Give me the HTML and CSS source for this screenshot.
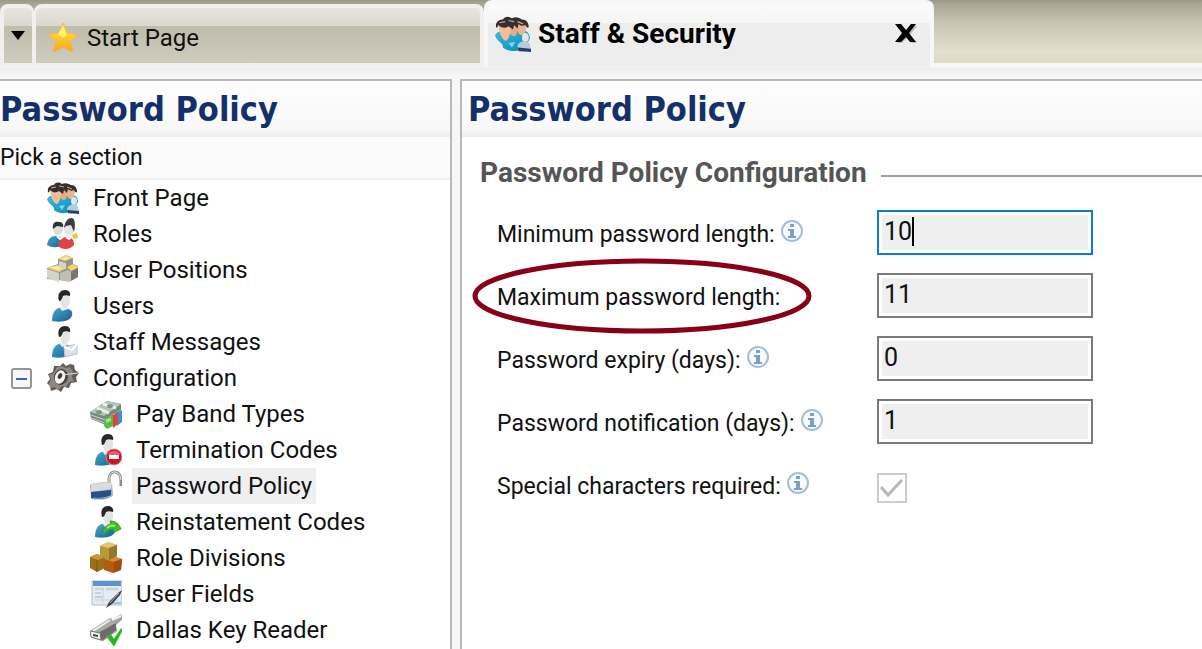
FILE: index.html
```html
<!DOCTYPE html>
<html lang="en">
<head>
    <meta charset="UTF-8">
    <meta name="viewport" content="width=device-width, initial-scale=1.0">
    <title>Staff &amp; Security</title>
    <link rel="stylesheet" href="styles.css">
</head>
<body>
    <!-- shared icon shapes -->
    <svg class="defs" aria-hidden="true">
        <defs>
            <linearGradient id="blue" x1="0" y1="0" x2="1" y2="1">
                <stop offset="0" stop-color="#4aa6d2"/>
                <stop offset="1" stop-color="#14618f"/>
            </linearGradient>
            <linearGradient id="cyan" x1="0" y1="0" x2="1" y2="1">
                <stop offset="0" stop-color="#35bfe2"/>
                <stop offset="1" stop-color="#0a86b8"/>
            </linearGradient>
            <linearGradient id="steel" x1="0" y1="0" x2="1" y2="1">
                <stop offset="0" stop-color="#e4e4e2"/>
                <stop offset="1" stop-color="#6e6e6c"/>
            </linearGradient>
            <linearGradient id="gold" x1="0" y1="0" x2="0" y2="1">
                <stop offset="0" stop-color="#ffef3a"/>
                <stop offset="1" stop-color="#f7a41c"/>
            </linearGradient>
            <symbol id="star" viewBox="0 0 32 32">
                <path d="M16 1l4.6 10 10.4 1.400-7.600 7.400 3 10.400-10-4.800-10 4.800 2.600-10.800L1 12.400l10.600-1.400z" fill="url(#gold)" stroke="#eeb56a" stroke-width="1"/>
                <path d="M16 4l3.600 9-3.600 3-5-4z" fill="#fff36a"/>
            </symbol>
            <symbol id="person" viewBox="0 0 32 32">
                <path d="M5 31c0-8 3-12 7-13 5-1 12 1 13 4 1 4-1 6-4 8-5 2-11 2-16 1z" fill="url(#blue)"/>
                <path d="M12 17l3 4 6-2-3-3z" fill="#dff0f8"/>
                <ellipse cx="18" cy="10" rx="5" ry="8" fill="#e4e4e2"/>
                <path d="M12 11c-2-7 1-11 6-11 4 0 6 3 5 6-3-1-5-1-7 0-1 3-2 5-4 5z" fill="#26282a"/>
            </symbol>
            <symbol id="group" viewBox="0 0 32 32">
                <path d="M0 17c2-4 6-4 9-3l16-1c4 0 6 3 6 7l-5 9c-8 3-14 3-19-1 1-4-6-6-7-11z" fill="url(#cyan)"/>
                <path d="M19 8c1-4 9-3 9 0 0 5-2 9-4 9-3 0-5-4-5-9z" fill="#f0b28c"/>
                <path d="M12 8c1-4 8-3 8 1 0 6-1 9-3 9-3 0-5-4-5-10z" fill="#eca980"/>
                <path d="M3 9c1-3 9-3 11 0 0 4-1 11-4 13-3 0-6-6-7-13z" fill="#f6bd98"/>
                <path d="M1 10c-1-4 2-7 6-7 2-3 5-3 8-1 4-2 7 0 9 1 4 0 6 3 6 7-1 1-2 0-3-2-2 1-4 1-6-1l-1 4-3-3-1 4-4-3c-3 2-6 2-9-1-1 2-1 3-2 2z" fill="#34302d"/>
                <path d="M4 6l5-1M12 4l5 1M20 5l5 2" stroke="#b5afab" stroke-width="1"/>
                <path d="M12 24l3 4 3-5z" fill="#7ed9ee"/>
                <ellipse cx="27" cy="19" rx="3" ry="4" fill="#dfe7ec"/>
                <path d="M20 27c1-5 8-6 11-2l1 6-11 1z" fill="#b9cbd7"/>
                <path d="M20 28l12 1v3l-11-1z" fill="#243f76"/>
            </symbol>
            <symbol id="roles" viewBox="0 0 32 32">
                <path d="M0 27c1-6 4-9 8-9 5-1 8 2 8 9-5 3-11 3-16 0z" fill="url(#blue)"/>
                <path d="M11 28c1-7 5-9 9-9 5 0 7 3 7 8-4 5-12 5-16 1z" fill="#e0424a"/>
                <path d="M24 17l6-2 1 5-4 1z" fill="#f0c83a"/>
                <ellipse cx="11" cy="11" rx="5" ry="6" fill="#ddd"/>
                <path d="M6 11c-1-6 2-8 6-7 3 0 5 2 4 5l-6-1z" fill="#333"/>
                <ellipse cx="22" cy="11" rx="5" ry="7" fill="#e6e5e3"/>
                <path d="M17 10c1-7 4-10 8-10 4 1 3 10 2 14l-3-7-5 1z" fill="#3b3b3b"/>
                <path d="M10 18l3 3 4-3M19 19l3 2 3-3" stroke="#fff" stroke-width="2" fill="none"/>
            </symbol>
            <symbol id="podium" viewBox="0 0 32 32">
                <path d="M0 14l11-4v-5l8-4 7 3v6l5 2v11l-9 4L0 25z" fill="#96948c"/>
                <path d="M0 14l10-3 10 3-8 4zM11 5l8-4 7 3-8 3zM20 13l6-3 6 3-8 4z" fill="#f0d567"/>
                <path d="M3 14l7-2 6 2-4 2zM14 5l5-2 4 1-5 2z" fill="#f5e9b5"/>
                <path d="M0 15l12 4v9L0 24zM12 7l7 2v6l-7-2z" fill="#d5d3cd"/>
                <path d="M13 19l8-3 3 2v9l-2 1-9-2z" fill="#c1beb5"/>
                <path d="M24 18l7-4v9l-7 4z" fill="#77756e"/>
            </symbol>
            <symbol id="message" viewBox="0 0 32 32">
                <use href="#person" width="32" height="32"/>
                <path d="M17 21l13-3v10l-12 3z" fill="#dce1e9" stroke="#bcc5d2"/>
                <path d="M17 21l8 3 5-6" fill="none" stroke="#fff" stroke-width="2"/>
            </symbol>
            <symbol id="gear" viewBox="0 0 32 32">
                <path d="M13 4l3-3 3 3 4-2 4 1 1 5 4 3-3 4 1 5-6 1-2 5-5-1-3 5-4-3-6 2-1-5-3-3 3-4-2-5 5-2 1-6z" fill="#625c58"/>
                <path d="M10 5l5-1 4 2 4-1 3 5-1 5 2 4-5 1-3 5-4-1-4 4-3-3-5 1-1-4 2-5-2-4 5-2z" fill="#8e8883"/>
                <ellipse cx="14" cy="15" rx="7" ry="8" fill="#4a4643" transform="rotate(20 14 15)"/>
                <ellipse cx="13" cy="15" rx="5" ry="7" fill="#f4f4f2" transform="rotate(20 13 15)"/>
                <ellipse cx="13" cy="14" rx="2" ry="3" fill="#3e3a37" transform="rotate(30 13 14)"/>
                <path d="M15 13l16-2" stroke="#e2dfdc" stroke-width="1"/>
            </symbol>
            <symbol id="money" viewBox="0 0 32 32">
                <path d="M0 14L17 3l14 3v12l-15 9L1 21z" fill="#75897a"/>
                <path d="M0 14L17 3l14 3-17 12z" fill="#b5c2b6"/>
                <path d="M7 10l12 5M13 6l13 4" stroke="#e8ede6" stroke-width="3"/>
                <path d="M1 17l14 5 16-10M1 20l14 5" stroke="#cdd6ce" stroke-width="1" fill="none"/>
                <ellipse cx="9" cy="14" rx="3" ry="2" fill="#7e9581"/>
                <ellipse cx="20" cy="8" rx="3" ry="2" fill="#7e9581"/>
                <path d="M25 15l7-3v12l-5 4z" fill="#4b8ccd"/>
                <path d="M21 18l7-3v11l-5 4z" fill="#d8453c"/>
                <path d="M15 20l8-2v10l-6 3-3-3z" fill="#58bd3f"/>
                <path d="M16 21l5-1v3l-5 2z" fill="#a4e38c"/>
            </symbol>
            <symbol id="stop" viewBox="0 0 32 32">
                <use href="#person" width="32" height="32"/>
                <circle cx="24" cy="23" r="8" fill="#cf1622" stroke="#e7868b"/>
                <path d="M18 20a7 6 0 0 1 12 0l-2 2H19z" fill="#e9626b"/>
                <path d="M19 21h10v4H19z" fill="#fff"/>
            </symbol>
            <symbol id="lock" viewBox="0 0 32 32">
                <path d="M19 15V9c0-10 12-9 12 1v6" fill="none" stroke="#8c8c8c" stroke-width="3"/>
                <path d="M19 14V9c0-10 12-9 12 1" fill="none" stroke="#eee" stroke-width="1"/>
                <path d="M0 15c1-2 18-4 22-2l1 12c-2 5-18 6-22 3z" fill="#a7b0bd"/>
                <path d="M1 15c3-2 17-3 21-2l-1 6-20 3z" fill="#d9dbde"/>
                <path d="M1 22l20-2v5c-4 4-15 5-20 3z" fill="#284f87"/>
                <path d="M3 28c6 1 12 0 17-2" stroke="#7fb0dc" stroke-width="1" fill="none"/>
            </symbol>
            <symbol id="reinstate" viewBox="0 0 32 32">
                <use href="#person" width="32" height="32"/>
                <path d="M13 29c0-7 3-10 8-11l-1-3c6 0 9 3 11 8l-7 3-1-3c-4 0-7 2-10 6z" fill="#3fbe26" stroke="#2ea31f"/>
                <path d="M17 22c2-2 5-3 8-2" stroke="#9cea7e" stroke-width="2" fill="none"/>
            </symbol>
            <symbol id="boxes" viewBox="0 0 32 32">
                <path d="M0 15l7-3 8 3v11l-8 4-7-4z" fill="#9d6d18"/>
                <path d="M0 15l7-3 8 3-7 3z" fill="#c99a3c"/>
                <path d="M14 17l8-3 10 3-1 11-8 3-9-3z" fill="#b55c10"/>
                <path d="M14 17l8-3 10 3-8 3z" fill="#d98a33"/>
                <path d="M24 20l8-3-1 11-8 3z" fill="#a04e0d"/>
                <path d="M10 4l8-4 9 3v11l-8 4-9-4z" fill="#b89a36"/>
                <path d="M10 4l8-4 9 3-8 3z" fill="#dcc870"/>
                <path d="M19 6l8-3v11l-8 4z" fill="#94772a"/>
                <path d="M7 18v12" stroke="#7d5612" stroke-width="1"/>
            </symbol>
            <symbol id="fields" viewBox="0 0 32 32">
                <path d="M2 3h30v24H2z" fill="#e6ebf2" stroke="#b2bcca"/>
                <path d="M3 3h28v5H3z" fill="#5e93cb"/>
                <path d="M5 11h9M5 15h6M5 19h8M16 11h12" stroke="#a3b6cf" stroke-width="1"/>
                <path d="M13 11v14M4 22h24" stroke="#c4d3e4" stroke-width="1"/>
                <path d="M21 24h10v2H20z" fill="#8bc6ec"/>
                <path d="M32 12l-2 5-8 9-6 4 3-6 9-9z" fill="#3a3f45"/>
                <path d="M29 15l-9 10" stroke="#b7bdc4" stroke-width="1"/>
            </symbol>
            <symbol id="reader" viewBox="0 0 32 32">
                <path d="M0 17L20 4l3 1 8-5 2 5-7 6 1 6-14 10-11-3z" fill="url(#steel)"/>
                <path d="M0 17L20 4l6 5-16 9z" fill="#aaa9a7"/>
                <path d="M3 17L20 6M22 6l9-4" stroke="#eee" stroke-width="2"/>
                <path d="M10 18l16-9v7L11 27z" fill="#6b6b69"/>
                <path d="M0 17l10 2 1 7-10-3z" fill="#f0f0ee" stroke="#777"/>
                <path d="M3 20l5 1v2l-5-1z" fill="#444"/>
                <path d="M17 23l4-2 3 4 7-10h2L24 32z" fill="#21b51f" stroke="#3fc63a"/>
            </symbol>
            <symbol id="info" viewBox="0 0 24 24">
                <circle cx="12" cy="12" r="10" fill="#f8fbfe" stroke="#a3bedb" stroke-width="2"/>
                <path d="M10 5h4v3h-4zM8 10h6v7h2v2H8v-2h2v-5H8z" fill="#7c9fc6"/>
            </symbol>
        </defs>
    </svg>

    <header class="tabs">
        <button type="button" class="tab tab-list" aria-label="Open tab list">
            <svg viewBox="0 0 14 9"><path d="M0 0h14L7 9z"/></svg>
        </button>
        <a href="#start" class="tab tab-start">
            <svg class="icon"><use href="#star"/></svg>
            <span>Start Page</span>
        </a>
        <div class="tab tab-active">
            <a href="#staff">
                <svg class="icon-large"><use href="#group"/></svg>
                <span>Staff &amp; Security</span>
            </a>
            <button type="button" class="close" aria-label="Close tab">
                <svg viewBox="0 0 22 20">
                    <path d="M2 2h5l5 6 5-6h5l-7 9 7 8h-5l-5-5-5 5H2l7-8z" fill="#bbb"/>
                    <path d="M0 0h6l5 6 5-6h5l-7 9 7 9h-6l-4-5-5 5H0l7-9z"/>
                </svg>
            </button>
        </div>
    </header>

    <div class="container">
        <nav class="panel sidebar">
            <h1>Password Policy</h1>
            <p class="pick">Pick a section</p>
            <ul class="tree">
                <li><a href="#front"><svg class="icon"><use href="#group"/></svg><span>Front Page</span></a></li>
                <li><a href="#roles-page"><svg class="icon"><use href="#roles"/></svg><span>Roles</span></a></li>
                <li><a href="#positions"><svg class="icon"><use href="#podium"/></svg><span>User Positions</span></a></li>
                <li><a href="#users"><svg class="icon"><use href="#person"/></svg><span>Users</span></a></li>
                <li><a href="#messages"><svg class="icon"><use href="#message"/></svg><span>Staff Messages</span></a></li>
                <li>
                    <button type="button" class="toggle" aria-label="Collapse Configuration" aria-expanded="true"></button>
                    <a href="#configuration"><svg class="icon"><use href="#gear"/></svg><span>Configuration</span></a>
                    <ul class="subtree">
                        <li><a href="#pay"><svg class="icon"><use href="#money"/></svg><span>Pay Band Types</span></a></li>
                        <li><a href="#termination"><svg class="icon"><use href="#stop"/></svg><span>Termination Codes</span></a></li>
                        <li><a href="#policy" class="selected"><svg class="icon"><use href="#lock"/></svg><span>Password Policy</span></a></li>
                        <li><a href="#codes"><svg class="icon"><use href="#reinstate"/></svg><span>Reinstatement Codes</span></a></li>
                        <li><a href="#divisions"><svg class="icon"><use href="#boxes"/></svg><span>Role Divisions</span></a></li>
                        <li><a href="#user-fields"><svg class="icon"><use href="#fields"/></svg><span>User Fields</span></a></li>
                        <li><a href="#dallas"><svg class="icon"><use href="#reader"/></svg><span>Dallas Key Reader</span></a></li>
                    </ul>
                </li>
            </ul>
        </nav>

        <main class="panel">
            <h1>Password Policy</h1>
            <form>
                <h2>Password Policy Configuration</h2>
                <div class="row">
                    <div class="caption">
                        <label for="min">Minimum password length:</label>
                        <svg class="info"><use href="#info"/></svg>
                    </div>
                    <div class="field focused">
                        <input type="text" id="min" value="10">
                        <span class="caret"></span>
                    </div>
                </div>
                <div class="row">
                    <div class="caption">
                        <label for="max">Maximum password length:</label>
                        <svg class="ring" viewBox="0 0 340 76"><ellipse cx="170" cy="38" rx="167" ry="35"/></svg>
                    </div>
                    <div class="field"><input type="text" id="max" value="11"></div>
                </div>
                <div class="row">
                    <div class="caption">
                        <label for="expiry">Password expiry (days):</label>
                        <svg class="info"><use href="#info"/></svg>
                    </div>
                    <div class="field"><input type="text" id="expiry" value="0"></div>
                </div>
                <div class="row">
                    <div class="caption">
                        <label for="notify">Password notification (days):</label>
                        <svg class="info"><use href="#info"/></svg>
                    </div>
                    <div class="field"><input type="text" id="notify" value="1"></div>
                </div>
                <div class="row">
                    <div class="caption">
                        <label for="special">Special characters required:</label>
                        <svg class="info"><use href="#info"/></svg>
                    </div>
                    <div class="check">
                        <input type="checkbox" id="special" checked disabled>
                        <svg class="tick" viewBox="0 0 26 26"><path d="M2 12l7 8L23 5"/></svg>
                    </div>
                </div>
            </form>
        </main>
    </div>
</body>
</html>
```
FILE: styles.css
```css
*{
    margin: 0;
    padding: 0;
    box-sizing: border-box;
}

body{
    min-height: 100vh;
    display: flex;
    flex-direction: column;
    overflow: hidden;
    background-color: #f7f7f7;
    color: #111;
    font-family: Roboto, sans-serif;
    font-size: 24px;
    line-height: 36px;
}

a{
    color: inherit;
    text-decoration: none;
}

ul{
    list-style: none;
}

.defs{
    position: absolute;
    width: 0;
    height: 0;
}

.icon{
    width: 32px;
    height: 32px;
    flex: none;
}

.icon-large{
    width: 36px;
    height: 36px;
    flex: none;
}

/* tabs */
.tabs{
    display: flex;
    align-items: flex-end;
    height: 79px;
    padding-bottom: 12px;
    background: linear-gradient(#9b9887, #a9a695 4px, #c9c6b5 24px, #e3e0cf 52px, #dcd9c5 63px, #f8f8f8 63px, #f8f8f8 67px, #ededed 68px, #f9f9f9 79px);
}

.tab{
    display: flex;
    align-items: center;
    border: 4px solid #f1f0ed;
    border-radius: 8px 8px 0 0;
}

.tab-list,
.tab-start{
    height: 63px;
    padding-top: 5px;
    background: linear-gradient(#e7e5df, #dad8ce 18px, #bfbcab 18px, #cfccbe);
}

.tab-list{
    width: 34px;
    justify-content: center;
    border-right-width: 2px;
}

.tab-list svg{
    width: 14px;
    height: 9px;
    margin-bottom: 6px;
}

.tab-start{
    flex: 0 1 450px;
    padding-left: 11px;
    gap: 8px;
    border-left-width: 2px;
}

.tab-active{
    flex: 0 1 450px;
    height: 67px;
    padding: 0 13px 3px 7px;
    justify-content: space-between;
    border-color: #f7f7f7;
    border-bottom: none;
    background: linear-gradient(#fafafa, #f6f6f6 19px, #ededed 19px, #ededed);
    color: #000;
    font-size: 28px;
    font-weight: bold;
}

.tab-active a{
    display: flex;
    align-items: center;
    gap: 7px;
}

.close{
    display: flex;
    border: none;
    background: transparent;
    cursor: pointer;
}

.close svg{
    width: 22px;
    height: 20px;
}

/* panels */
.container{
    flex: 1;
    display: grid;
    grid-template-columns: minmax(0, 452px) 1fr;
    gap: 8px;
}

.panel{
    border: 2px solid #b9b9b9;
    border-right: none;
    border-bottom: none;
    background-color: #fff;
}

.sidebar{
    border-left: none;
    border-right: 2px solid #b9b9b9;
}

h1{
    height: 56px;
    padding-left: 6px;
    background: linear-gradient(#fdfdfd, #f8f8f8 48px, #ededed);
    color: #14306a;
    font-family: "DejaVu Sans Condensed", "DejaVu Sans", sans-serif;
    font-size: 34px;
    line-height: 56px;
}

.sidebar h1{
    padding-left: 0;
}

.pick{
    height: 43px;
    border-bottom: 2px solid #f0f0f0;
    background-color: #fbfbfb;
    font-size: 23px;
    line-height: 42px;
}

.tree li{
    position: relative;
}

.tree a{
    display: flex;
    align-items: center;
    height: 36px;
    padding-left: 47px;
    gap: 10px;
}

.tree span{
    padding: 0 4px;
}

.subtree a{
    padding-left: 90px;
}

.selected span{
    background-color: #efefef;
}

.toggle{
    position: absolute;
    left: 11px;
    top: 8px;
    width: 21px;
    height: 21px;
    border: 2px solid #959595;
    border-radius: 3px;
    background: linear-gradient(#4060b8, #4060b8) center / 11px 2px no-repeat #f7f7f7;
    cursor: pointer;
}

/* form */
form{
    padding: 16px 0 0 18px;
}

h2{
    display: flex;
    align-items: center;
    gap: 14px;
    margin-bottom: 8px;
    color: #555;
    font-size: 28px;
    line-height: 40px;
}

h2::after{
    content: "";
    flex: 1;
    height: 2px;
    margin-top: 6px;
    background-color: #a0a0a0;
}

.row{
    display: grid;
    grid-template-columns: 380px 1fr;
    align-items: center;
    height: 63px;
    padding-left: 17px;
}

.caption{
    position: relative;
    display: flex;
    align-items: center;
    gap: 5px;
    padding-top: 4px;
    font-size: 23px;
}

.info{
    width: 24px;
    height: 24px;
    margin-bottom: 8px;
}

.field{
    position: relative;
    width: 216px;
    height: 45px;
    padding: 3px;
    border: 2px solid #7a7a7a;
    background-color: #fff;
}

.field input{
    display: block;
    width: 100%;
    height: 100%;
    padding: 0 0 2px 2px;
    border: none;
    outline: none;
    background-color: #efefef;
    color: #111;
    font: inherit;
    font-size: 25px;
    caret-color: transparent;
}

.focused{
    border-color: #0a7ade;
}

.caret{
    position: absolute;
    left: 33px;
    top: 5px;
    width: 2px;
    height: 29px;
    background-color: #000;
}

.check{
    display: grid;
    width: 30px;
    height: 30px;
    margin-top: 6px;
    border: 2px solid #ccc;
    background-color: #fff;
}

.check input,
.tick{
    grid-area: 1 / 1;
    width: 100%;
    height: 100%;
    appearance: none;
}

.tick path{
    fill: none;
    stroke: #b8b8b8;
    stroke-width: 3;
}

.ring{
    position: absolute;
    left: -25px;
    top: -18px;
    width: 340px;
    height: 76px;
}

.ring ellipse{
    fill: none;
    stroke: #880015;
    stroke-width: 5;
}
```
